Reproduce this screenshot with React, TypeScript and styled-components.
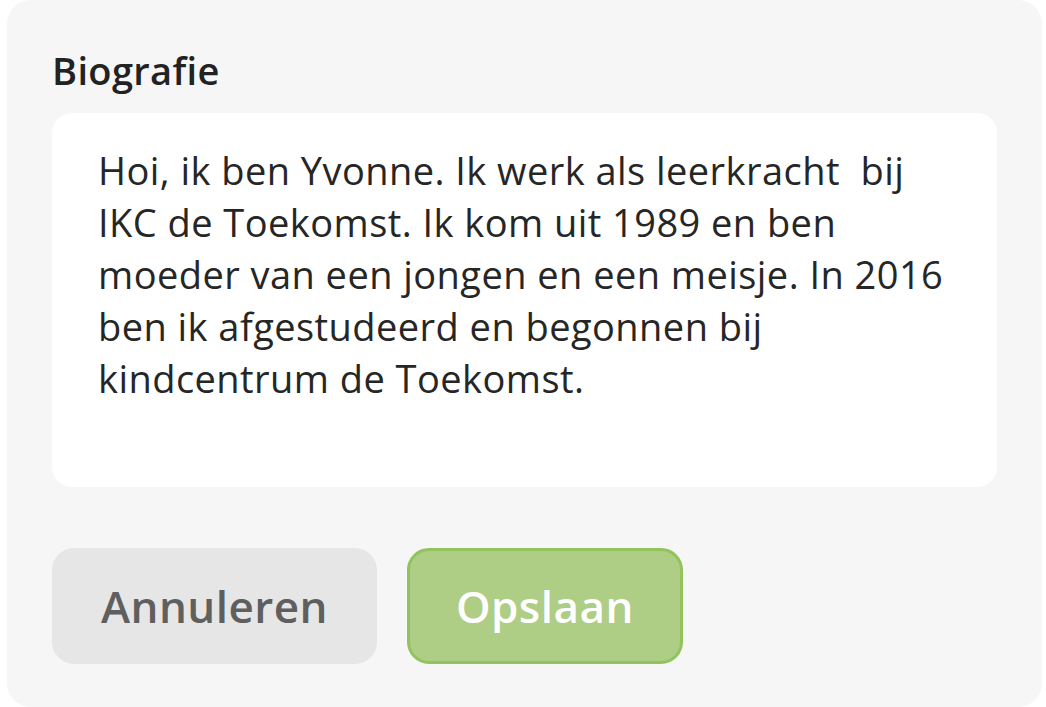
import styled, { createGlobalStyle } from "styled-components"

const GlobalStyle = createGlobalStyle`
  html, body {
    margin: 0;
    padding: 0;
    background: #ffffff;
  }
  body {
    font-family: "Open Sans", "Noto Sans", sans-serif;
  }
`

const Card = styled.form`
  box-sizing: border-box;
  display: flex;
  flex-direction: column;
  margin: 0 4px 0 7px;
  height: 707px;
  padding: 44px 45px 0;
  background: #f6f6f6;
  border-radius: 24px;
`

const Label = styled.label`
  font-size: 38px;
  font-weight: 600;
  line-height: 52px;
  letter-spacing: 0.35px;
  color: #222222;
`

const Bio = styled.textarea`
  box-sizing: border-box;
  margin-top: 17px;
  width: 945px;
  height: 374px;
  padding: 31px 38px 31px 46px;
  border: none;
  border-radius: 20px;
  background: #ffffff;
  font-family: "Open Sans", "Noto Sans", sans-serif;
  font-size: 38px;
  line-height: 52px;
  letter-spacing: 0.45px;
  color: #262626;
  resize: none;
  overflow: hidden;
  outline: none;
`

const Actions = styled.div`
  display: flex;
  gap: 30px;
  margin-top: 61px;
`

const Button = styled.button<{ $primary?: boolean }>`
  box-sizing: border-box;
  height: 116px;
  padding: 0 ${(p) => (p.$primary ? "46px" : "49px")};
  border-radius: 22px;
  border: ${(p) => (p.$primary ? "3px solid #92c35c" : "none")};
  background: ${(p) => (p.$primary ? "#aecd85" : "#e6e6e6")};
  color: ${(p) => (p.$primary ? "#ffffff" : "#5f5f5f")};
  font-family: "Open Sans", "Noto Sans", sans-serif;
  font-size: 44px;
  font-weight: 600;
  letter-spacing: 0.45px;
  cursor: pointer;
`

const bio =
  "Hoi, ik ben Yvonne. Ik werk als leerkracht  bij IKC de Toekomst. Ik kom uit 1989 en ben moeder van een jongen en een meisje. In 2016 ben ik afgestudeerd en begonnen bij kindcentrum de Toekomst."

export default function App() {
  return (
    <>
      <GlobalStyle />
      <Card onSubmit={(e) => e.preventDefault()}>
        <Label htmlFor="bio">Biografie</Label>
        <Bio id="bio" defaultValue={bio} spellCheck={false} />
        <Actions>
          <Button type="button">Annuleren</Button>
          <Button type="submit" $primary>
            Opslaan
          </Button>
        </Actions>
      </Card>
    </>
  )
}
